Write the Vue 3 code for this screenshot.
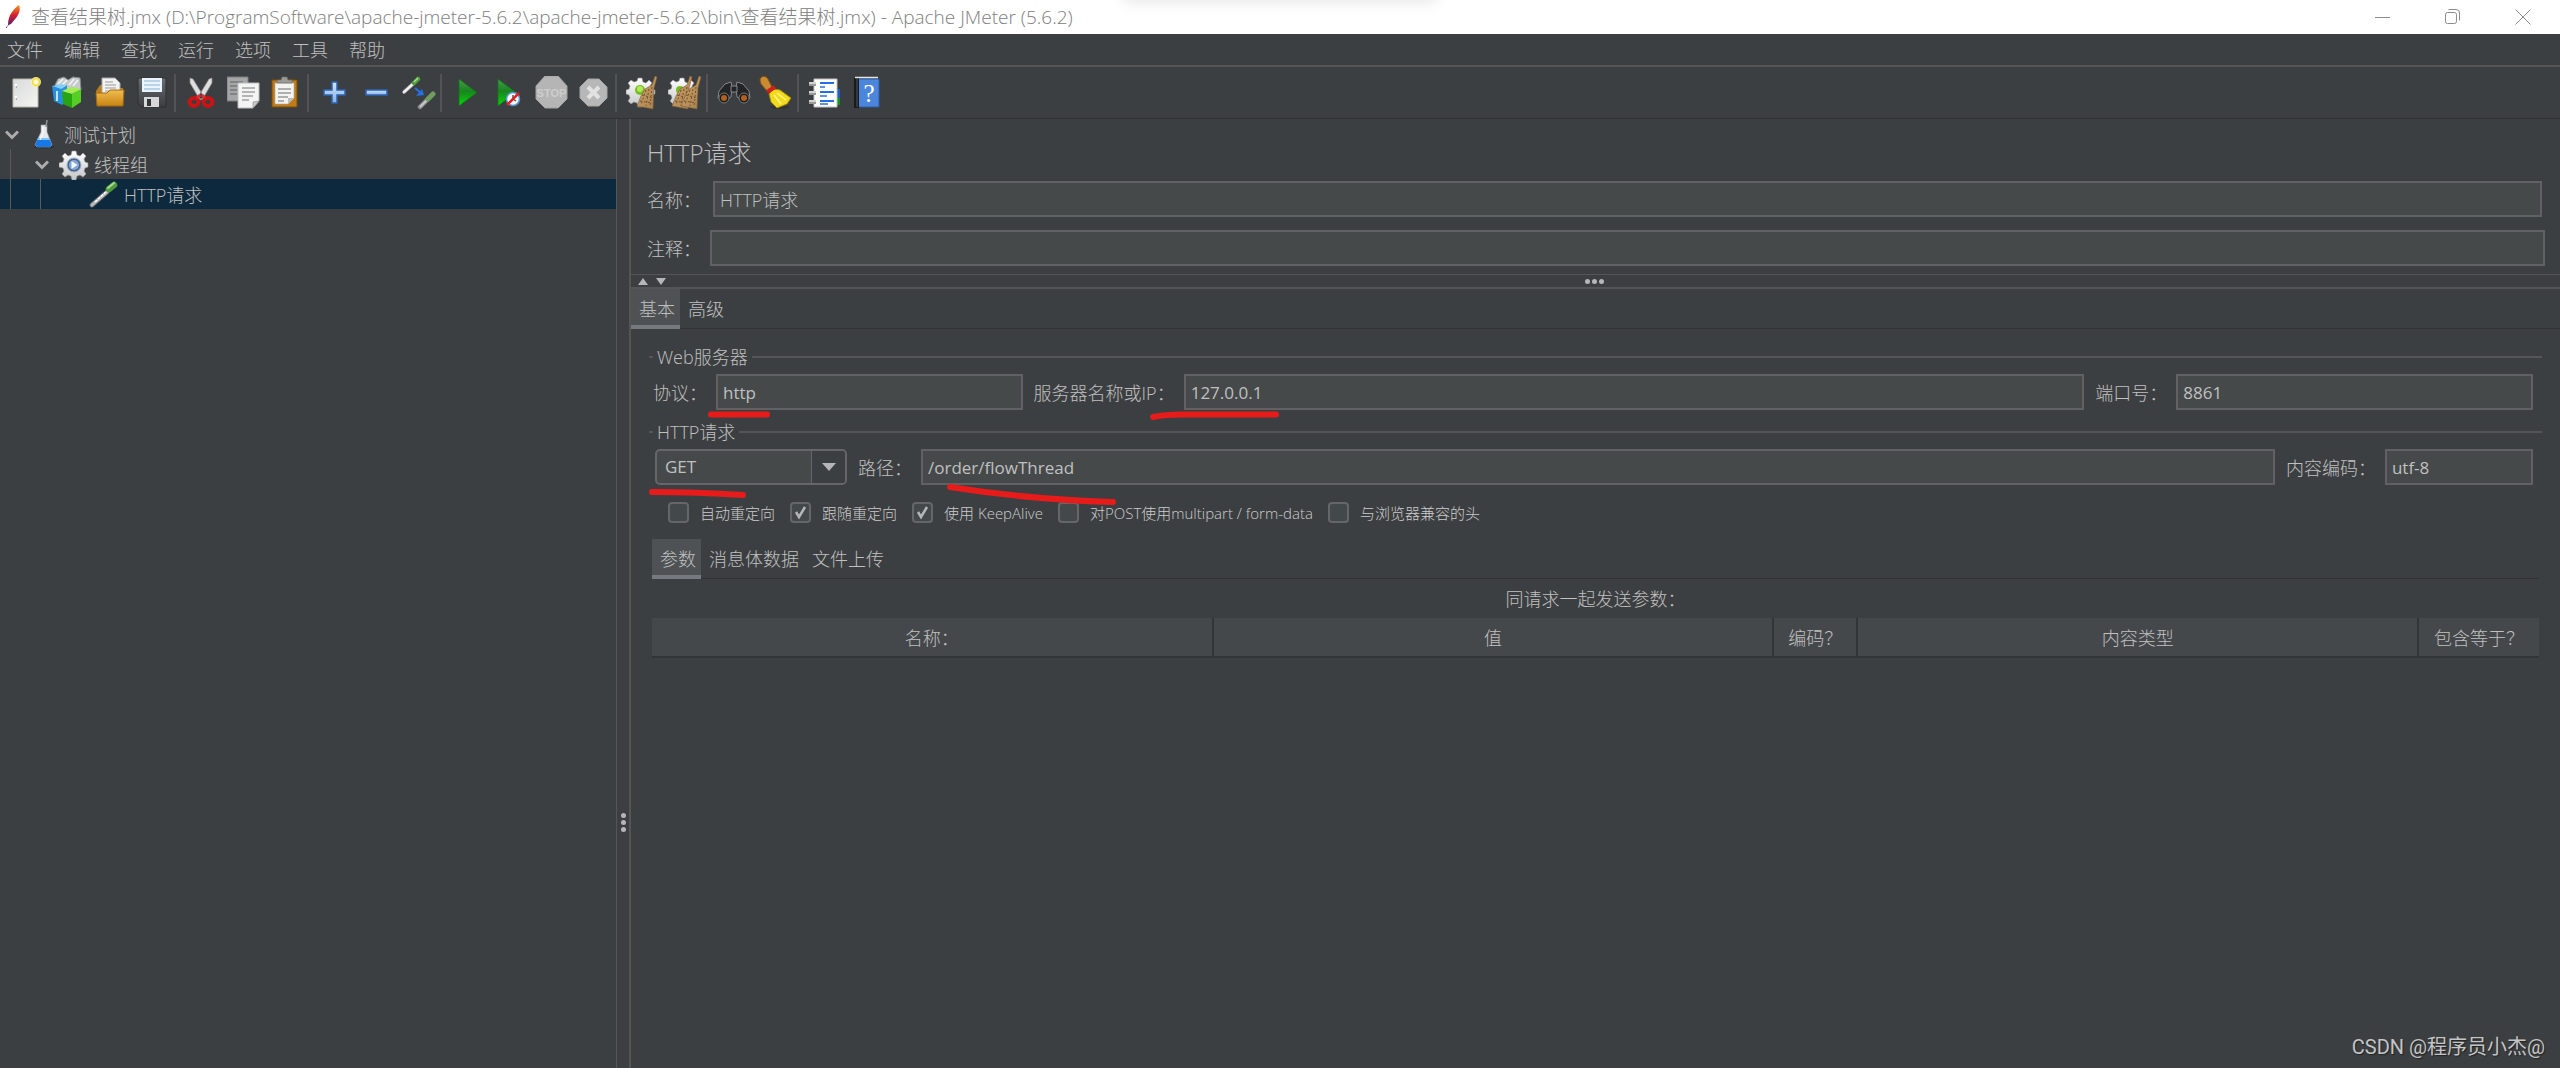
<script setup>
import { ref } from 'vue'

const menus = ['文件', '编辑', '查找', '运行', '选项', '工具', '帮助']

const gear = '<path fill="url(#g-silver)" stroke="#8d8f91" stroke-width=".6" d="M12 2h4l1 4 3 1 3-3 3 3-2 3 1 3 4 1v4l-4 1-1 3 2 3-3 3-3-2-3 1-1 4h-4l-1-4-3-1-3 2-3-3 2-3-1-3-3-1v-4l3-1 1-3-2-3 3-3 3 2 3-1z"/>'
const broom = (x) => `<g transform="translate(${x} 0)"><path fill="url(#g-broom)" stroke="#7a5c36" stroke-width=".6" d="M18 0l2 1-3 11-1 21-16-3 4-10 4-7 7-4z"/><path stroke="#6f5230" stroke-width="1" stroke-dasharray="2 2" d="M5 19l11 3M3 25l12 2M9 14L4 29M12 13L9 30M15 11l-2 20"/></g>`

const groups = [
  [
    { name: '新建', art: '<path fill="url(#g-paper)" stroke="#b9b9a8" d="M3 3h25v28H3z"/><path stroke="#fff" stroke-width="2" d="M5 9h2M5 21h2"/><path stroke="#777" d="M6 11h1M6 23h1"/><circle cx="26" cy="6" r="5" fill="#fff6a0" opacity=".9"/><circle cx="26" cy="6" r="3.500" fill="none" stroke="#f2dc3c" stroke-width="1.500"/><circle cx="26" cy="6" r="2" fill="#fffde8"/>' },
    { name: '模板', art: '<path fill="#c5cacb" stroke="#858b8d" d="M3 9l3-6 6-2 4 3 5-3 7 1 1 12-12 3z"/><path stroke="#f3f5f5" stroke-width="1.500" d="M6 8l5-5M9 10l6-6M17 9l5-6M21 10l5-6"/><path fill="#2590e0" d="M0 10l9 3 6-4v16l-5 4-8-4z"/><path fill="#7fd0ff" d="M0 10l9 3 5-3-4-2z"/><path stroke="#fff" stroke-width="1.500" d="M5 15v10"/><path fill="#28a312" d="M10 15l10 3v14l-9-4z"/><path fill="#55cf24" d="M20 18l9-5v13l-9 6z"/><path fill="#a3ee55" d="M10 15l9-4 10 2-9 5z"/>' },
    { name: '打开', art: '<path fill="#b97d1d" d="M2 15l4-6h7l3 3h13v9H2z"/><path fill="#f3f3f3" stroke="#a9a9a9" d="M8 18V2h13l5 5v12z"/><path stroke="#999" d="M11 6h8M11 9h11M11 12h11M11 15h11"/><path fill="url(#g-folder)" stroke="#a36a0e" d="M2 17h11l3-3h14l-1 16H3z"/>' },
    { name: '保存', art: '<path fill="url(#g-floppy)" stroke="#2f3033" d="M2 2h28v29H5l-3-3z"/><path fill="#eaf4fc" d="M6 2h20v14H6z"/><path stroke="#a9c8e2" stroke-width="1.500" d="M8 5h16M8 9h16M8 13h16"/><path fill="#d8d8d8" d="M8 21h15v10H8z"/><path fill="#33363a" d="M11 23h4v7h-4z"/>' },
  ],
  [
    { name: '剪切', art: '<path fill="#dedede" stroke="#8a8a8a" stroke-width=".7" d="M5 2l3 1 11 18-4 3L5 7zM27 2l-3 1-11 18 4 3L27 7z"/><g fill="none" stroke="#c81414" stroke-width="4"><ellipse cx="9" cy="26" rx="4.500" ry="4"/><ellipse cx="23" cy="26" rx="4.500" ry="4"/></g><path stroke="#e62a2a" stroke-width="3" d="M12 22l3-3M20 22l-3-3"/>' },
    { name: '复制', art: '<path fill="#a4a6a7" stroke="#7b7d7e" d="M0 1h21v24H0z"/><path stroke="#77797a" stroke-width="1.500" d="M3 6h13M3 10h7M3 14h7M3 18h7"/><path fill="#f4f4f4" stroke="#bcbcbc" d="M11 7h21v18l-6 7H11z"/><path stroke="#a0a0a0" stroke-width="1.500" d="M15 12h13M15 16h13M15 20h11M15 24h7"/><path fill="#c9c9c9" stroke="#888" stroke-width=".6" d="M32 25l-6 7v-6z"/>' },
    { name: '粘贴', art: '<path fill="#c17c1a" stroke="#7d4d08" d="M3 4h25v27H3z"/><path fill="#f3f3f1" stroke="#aaa" stroke-width=".6" d="M6 7h19v15l-6 6H6z"/><path stroke="#999" stroke-width="1.500" d="M9 13h13M9 17h13M9 21h10M9 25h6"/><path fill="#bdbdbd" d="M25 22l-6 6v-6z"/><path fill="#9b9c98" stroke="#6a6a66" stroke-width=".7" d="M8 7V4h4l1-3h5l1 3h4v3z"/>' },
  ],
  [
    { name: '展开', art: '<path fill="url(#g-blue)" stroke="#2c64b4" stroke-width="1.500" d="M14 6h5v8h8v5h-8v8h-5v-8H6v-5h8z"/>' },
    { name: '折叠', art: '<path fill="url(#g-blue)" stroke="#2c64b4" stroke-width="1.500" d="M6 14h21v5H6z"/>' },
    { name: '切换', art: '<path stroke="#77797a" stroke-width="4" d="M2 16L12 7"/><path stroke="#f2f2f2" stroke-width="2.500" d="M1 17L12 7"/><path stroke="#4f9c3d" stroke-width="4.500" stroke-linecap="round" d="M12 7l4-4"/><path stroke="#a7e08c" stroke-width="1.500" d="M12 6l4-4"/><path stroke="#2471e8" stroke-width="2" d="M13 12l6 5"/><path fill="#2471e8" d="M22 19l-8 1 6-7z"/><path stroke="#8b8d8e" stroke-width="4.500" stroke-linecap="round" d="M18 31l8-8"/><path stroke="#c7c9c9" stroke-width="2" d="M18 31l7-7"/><path stroke="#6f9c62" stroke-width="5" stroke-linecap="round" d="M26 23l5-5"/>' },
  ],
  [
    { name: '启动', art: '<path fill="url(#g-play)" stroke="#12701a" stroke-width=".8" d="M8 3l18 13.500L8 30z"/>' },
    { name: '无停顿启动', art: '<path fill="url(#g-play)" stroke="#12701a" stroke-width=".8" d="M5 3l18 13.500L5 30z"/><circle cx="20" cy="23" r="6.500" fill="#f4f6fa" stroke="#5b93cf" stroke-width="1.500"/><path stroke="#555" stroke-width="1.500" d="M20 23v-4M20 23l3 2"/><path stroke="#dd2222" stroke-width="2.500" d="M14 29l12-12"/>' },
    { name: '停止', art: '<path fill="#b5b5b5" stroke="#a3a3a3" d="M10 0h13l9 10v13l-9 9H10l-9-9V10z"/><text x="16.500" y="21" text-anchor="middle" font-family="Liberation Sans, sans-serif" font-size="11" font-weight="700" fill="#cdcdcd">STOP</text>' },
    { name: '关闭', art: '<path fill="#b7b7b7" stroke="#a5a5a5" d="M11 3h11l8 8v11l-8 8H11l-8-8V11z"/><path stroke="#e2e2e2" stroke-width="4" d="M11 11l11 11M22 11L11 22"/>' },
  ],
  [
    { name: '清除', art: gear + '<circle cx="14" cy="14" r="5" fill="#76bd21"/><circle cx="14" cy="13" r="3" fill="#b4e65d"/>' + broom(11) },
    { name: '清除全部', art: gear + '<circle cx="12" cy="14" r="4" fill="#76bd21"/>' + broom(4) + broom(13) },
  ],
  [
    { name: '查找', art: '<g fill="#232425" stroke="#85898b" stroke-width="1"><path d="M8 8l6-2 1 5-1 10-5 3-8-2 1-7z"/><path d="M26 8l-6-2-1 5 1 10 5 3 8-2-1-7z"/><path d="M14 10h6v6h-6z"/></g><circle cx="7" cy="22" r="5" fill="#1a1a1a" stroke="#77797a"/><circle cx="27" cy="22" r="5" fill="#1a1a1a" stroke="#77797a"/><circle cx="7" cy="22" r="3" fill="#b3601e"/><circle cx="27" cy="22" r="3" fill="#b3601e"/>' },
    { name: '重置搜索', art: '<ellipse cx="21" cy="31" rx="10" ry="2" fill="#25272880"/><path fill="#c98a32" stroke="#85530f" d="M1 4c0-4 6-5 8-1l4 8-5 4-6-7z"/><path fill="#f1d91c" stroke="#a38808" d="M15 13l6 1 11 8-4 6-10 4-6-6-2-8z"/><path stroke="#fff38a" stroke-width="1.500" d="M18 17l9 7M15 19l7 9"/><path stroke="#c9201d" stroke-width="4" d="M8 16l8-5"/>' },
  ],
  [
    { name: '函数助手', art: '<path fill="#1c5fc9" d="M26 13h6v9h-6z"/><path fill="#169020" d="M26 22h6v7h-6z"/><path fill="#fff" stroke="#c2c2c2" d="M6 3h23v28H6z"/><path stroke="#2470e0" stroke-width="2" d="M12 7h14M12 16h14M12 25h14"/><path stroke="#2470e0" stroke-width="1.500" d="M12 11h5M12 20h7M12 28h8"/><path stroke="#999" stroke-width="4" d="M1 8h7M1 17h7M1 26h7"/><path stroke="#e8e8e8" stroke-width="1.500" d="M1 7h7M1 16h7M1 25h7"/>' },
    { name: '帮助', art: '<path fill="#4c86dc" stroke="#2b5ca8" d="M8 3h21v28H8z"/><path fill="#191a1c" d="M4 2h5v30H4z"/><path stroke="#e6e6e6" stroke-width="1.500" d="M5 1.500h23"/><path stroke="#555" d="M7 3v28"/><text x="19" y="26" text-anchor="middle" font-family="Liberation Serif, serif" font-size="25" fill="#fff">?</text>' },
  ],
]

const name = ref('HTTP请求')
const comment = ref('')
const protocol = ref('http')
const server = ref('127.0.0.1')
const port = ref('8861')
const method = ref('GET')
const path = ref('/order/flowThread')
const encoding = ref('utf-8')

const options = ref([
  { label: '自动重定向', on: false },
  { label: '跟随重定向', on: true },
  { label: '使用 KeepAlive', on: true },
  { label: '对POST使用multipart / form-data', on: false },
  { label: '与浏览器兼容的头', on: false },
])

const mainTabs = ['基本', '高级']
const mainTab = ref('基本')
const bodyTabs = ['参数', '消息体数据', '文件上传']
const bodyTab = ref('参数')
</script>

<template>
  <div class="window">
    <svg class="defs" aria-hidden="true">
      <defs>
        <linearGradient id="g-paper" x2="1" y2="1"><stop stop-color="#d9dadb" /><stop offset="1" stop-color="#f4f4f2" /></linearGradient>
        <linearGradient id="g-folder" x2="0" y2="1"><stop stop-color="#f0bd52" /><stop offset="1" stop-color="#c78412" /></linearGradient>
        <linearGradient id="g-floppy" x2="0" y2="1"><stop stop-color="#6a6d72" /><stop offset="1" stop-color="#3a3c40" /></linearGradient>
        <linearGradient id="g-silver" x2="0" y2="1"><stop stop-color="#ffffff" /><stop offset="1" stop-color="#c3c5c6" /></linearGradient>
        <linearGradient id="g-broom" x2="1" y2="1"><stop stop-color="#cfa36a" /><stop offset="1" stop-color="#a9804e" /></linearGradient>
        <linearGradient id="g-blue" x2="0" y2="1"><stop stop-color="#cfe3f8" /><stop offset="1" stop-color="#86b3e6" /></linearGradient>
        <linearGradient id="g-play" x2="0" y2="1"><stop stop-color="#4a9a4a" /><stop offset=".45" stop-color="#17851e" /><stop offset="1" stop-color="#08d808" /></linearGradient>
        <linearGradient id="g-feather" x2="0" y2="1"><stop stop-color="#f59a23" /><stop offset=".5" stop-color="#d5202f" /><stop offset="1" stop-color="#5c2370" /></linearGradient>
      </defs>
    </svg>

    <header class="titlebar">
      <svg class="feather" width="18" height="24" viewBox="0 0 18 24" aria-hidden="true">
        <path fill="url(#g-feather)" d="M14 0c2 4 0 9-3 13l-5 6-3 1c0-5 1-9 4-13 3-4 5-6 7-7z" />
        <path stroke="#5c2370" fill="none" stroke-dasharray="2 1" d="M1 23l4-5" />
      </svg>
      <h1>查看结果树.jmx (D:\ProgramSoftware\apache-jmeter-5.6.2\apache-jmeter-5.6.2\bin\查看结果树.jmx) - Apache JMeter (5.6.2)</h1>
      <div class="controls">
        <button aria-label="最小化"><svg width="16" height="16" viewBox="0 0 16 16"><path d="M0 8.500h15" /></svg></button>
        <button aria-label="还原"><svg width="16" height="16" viewBox="0 0 16 16"><rect x=".5" y="3.500" width="11" height="11" rx="2" /><path d="M3.500 .5H11a3.500 3.500 0 0 1 3.500 3.500v7.500" /></svg></button>
        <button aria-label="关闭"><svg width="16" height="16" viewBox="0 0 16 16"><path d="M.5 .5l15 15M15.500 .5l-15 15" /></svg></button>
      </div>
    </header>

    <nav class="menubar">
      <button v-for="m in menus" :key="m">{{ m }}</button>
    </nav>

    <div class="toolbar" role="toolbar">
      <div v-for="(group, i) in groups" :key="i" class="group">
        <button v-for="tool in group" :key="tool.name" :aria-label="tool.name">
          <svg width="34" height="34" viewBox="0 0 34 34" fill="none" v-html="tool.art"></svg>
        </button>
      </div>
    </div>

    <div class="body">
      <aside class="tree">
        <ul>
          <li class="node">
            <svg class="chevron" width="14" height="10" viewBox="0 0 14 10"><path d="M1 1.500l6 6 6-6" /></svg>
            <svg class="glyph" width="30" height="30" viewBox="0 0 30 30">
              <ellipse cx="15" cy="27" rx="10" ry="1.500" fill="#2b2d2e" />
              <path fill="#e3e8ec" stroke="#9aa2a8" stroke-width=".6" d="M12 5h6v7l5 13-2 2H8l-2-2 6-13z" />
              <path fill="#1a78e6" d="M9 18h11l3 7-2 2H8l-2-2z" />
              <path fill="#7fc0ff" d="M9 18h11l1 2H8z" />
              <path stroke="#8f9496" stroke-width="1.500" d="M17 7l1-7" />
              <path stroke="#fff" d="M14 7v6l-3 7" fill="none" />
            </svg>
            测试计划
          </li>
          <li class="node level-1">
            <svg class="chevron" width="14" height="10" viewBox="0 0 14 10"><path d="M1 1.500l6 6 6-6" /></svg>
            <svg class="glyph" width="30" height="30" viewBox="0 0 30 30">
              <path fill="url(#g-silver)" stroke="#999c9e" stroke-width=".6" d="M13 1h4l1 4 3 1 3-3 3 3-2 3 1 3 3 1v4l-3 1-1 3 2 3-3 3-3-2-3 1-1 4h-4l-1-4-3-1-3 2-3-3 2-3-1-3-4-1v-4l4-1 1-3-2-3 3-3 3 3 3-1z" />
              <circle cx="15" cy="15" r="7" fill="#47648f" stroke="#a3b2c6" />
              <circle cx="15" cy="15" r="5" fill="#86a8d6" />
              <path fill="#f4f8fc" d="M12.500 11l6 4-6 4z" />
            </svg>
            线程组
          </li>
          <li class="node level-2 selected">
            <svg class="glyph" width="30" height="30" viewBox="0 0 30 30">
              <path stroke="#4e5354" stroke-width="5" stroke-linecap="round" d="M3 25L18 12" />
              <path stroke="#b4b8b9" stroke-width="3.500" stroke-linecap="round" d="M3 25L18 12" />
              <path stroke="#fff" stroke-width="1.500" stroke-dasharray="3 1" d="M6 22L17 12" />
              <path stroke="#4f9a3e" stroke-width="6.500" stroke-linecap="round" d="M20 9l5-4" />
              <path stroke="#a5dc8a" stroke-width="2" stroke-linecap="round" d="M19 8l6-5" />
            </svg>
            HTTP请求
          </li>
        </ul>
      </aside>

      <div class="splitter vertical"><i></i><i></i><i></i></div>

      <main class="editor">
        <section class="head">
          <h2>HTTP请求</h2>
          <div class="row name-row">
            <label for="f-name">名称：</label>
            <input id="f-name" v-model="name" class="title-input" type="text" />
          </div>
          <div class="row comment-row">
            <label for="f-comment">注释：</label>
            <input id="f-comment" v-model="comment" type="text" />
          </div>
        </section>

        <div class="splitter horizontal">
          <svg class="arrows" width="28" height="7" viewBox="0 0 28 7"><path d="M0 7l5-7 5 7zM18 0h10l-5 7z" /></svg>
          <span class="dots"><i></i><i></i><i></i></span>
        </div>

        <div class="tabs">
          <button v-for="t in mainTabs" :key="t" :class="{ active: t === mainTab }" @click="mainTab = t">{{ t }}</button>
        </div>

        <div class="panel">
          <fieldset>
            <legend>Web服务器</legend>
            <div class="row">
              <label for="f-protocol">协议：</label>
              <div class="field protocol">
                <input id="f-protocol" v-model="protocol" type="text" />
                <svg class="mark" width="80" height="20"><path d="M15 14.500h56" /></svg>
              </div>
              <label for="f-server">服务器名称或IP：</label>
              <div class="field server">
                <input id="f-server" v-model="server" type="text" />
                <svg class="mark" width="140" height="20"><path d="M-11 17c10-2 20-2.500 29-2.500h94" /></svg>
              </div>
              <label for="f-port">端口号：</label>
              <div class="field port">
                <input id="f-port" v-model="port" type="text" />
              </div>
            </div>
          </fieldset>

          <fieldset>
            <legend>HTTP请求</legend>
            <div class="row">
              <div class="field method">
                <select v-model="method" aria-label="方法">
                  <option>GET</option>
                  <option>POST</option>
                  <option>PUT</option>
                  <option>DELETE</option>
                </select>
                <span class="arrow"><svg width="14" height="8" viewBox="0 0 14 8"><path d="M0 0h14L7 8z" /></svg></span>
                <svg class="mark" width="120" height="30"><path d="M17 17c30 0 60 1 91 3" /></svg>
              </div>
              <label for="f-path">路径：</label>
              <div class="field path">
                <input id="f-path" v-model="path" type="text" />
                <svg class="mark" width="220" height="30"><path d="M49 12c50 8 100 13 163 15" /></svg>
              </div>
              <label for="f-encoding">内容编码：</label>
              <div class="field encoding">
                <input id="f-encoding" v-model="encoding" type="text" />
              </div>
            </div>
          </fieldset>

          <div class="options">
            <label v-for="o in options" :key="o.label">
              <input v-model="o.on" type="checkbox" />{{ o.label }}
            </label>
          </div>

          <div class="inner">
            <div class="tabs">
              <button v-for="t in bodyTabs" :key="t" :class="{ active: t === bodyTab }" @click="bodyTab = t">{{ t }}</button>
            </div>
            <table>
              <caption>同请求一起发送参数：</caption>
              <colgroup>
                <col />
                <col />
                <col class="narrow" />
                <col />
                <col class="last" />
              </colgroup>
              <thead>
                <tr><th>名称：</th><th>值</th><th>编码？</th><th>内容类型</th><th>包含等于？</th></tr>
              </thead>
            </table>
          </div>
        </div>
      </main>
    </div>

    <p class="credit">CSDN @程序员小杰@</p>
  </div>
</template>

<style>
body {
  margin: 0;
  background: #3c3f41;
}
</style>

<style scoped>
.window {
  position: relative;
  display: flex;
  flex-direction: column;
  box-sizing: border-box;
  min-height: 100vh;
  background: #3c3f41;
  color: #c0c0c0;
  font: 300 18px/24px "Open Sans", "Noto Sans CJK SC", sans-serif;
}

.defs {
  position: absolute;
  width: 0;
  height: 0;
}

button,
input,
select {
  font: inherit;
  color: inherit;
  box-sizing: border-box;
}

button {
  border: 0;
  padding: 0;
  background: none;
}

/* title bar */
.titlebar {
  position: relative;
  display: flex;
  align-items: center;
  height: 34px;
  overflow: hidden;
  padding: 0 2px 0 5px;
  background: #fff;
  color: #808080;
}

.titlebar::before {
  content: "";
  position: absolute;
  top: -10px;
  left: 44%;
  width: 12%;
  height: 8px;
  box-shadow: 0 0 16px 2px #00000024;
}

.titlebar h1 {
  flex: 1;
  margin: 0 0 0 8px;
  font: inherit;
  font-size: 19px;
  white-space: nowrap;
}

.controls {
  display: flex;
}

.controls button {
  display: grid;
  place-items: center;
  width: 70px;
  height: 34px;
}

.controls svg {
  fill: none;
  stroke: #8c8c8c;
}

/* menu and toolbar */
.menubar {
  display: flex;
  height: 31px;
  border-bottom: 2px solid #555555;
}

.menubar button {
  padding: 0 14px 0 7px;
}

.toolbar {
  display: flex;
  align-items: center;
  height: 51px;
  padding-left: 6px;
  border-bottom: 1px solid #323232;
}

.group {
  display: flex;
}

.group + .group {
  padding-left: 5px;
  border-left: 2px solid #515354;
}

.group button {
  display: grid;
  place-items: center;
  width: 42px;
  height: 38px;
}

/* tree */
.body {
  flex: 1;
  display: flex;
}

.tree {
  flex: 0 0 24%;
  min-width: 616px;
  box-sizing: border-box;
}

.tree ul {
  margin: 0;
  padding: 0;
  list-style: none;
}

.node {
  display: flex;
  align-items: center;
  box-sizing: border-box;
  height: 30px;
  padding: 2px 0 0 5px;
}

.node .chevron {
  fill: none;
  stroke: #adadad;
  stroke-width: 3;
}

.node .glyph {
  margin: 0 5px 0 10px;
  fill: none;
}

.level-1 {
  padding-left: 35px;
  background: linear-gradient(#5a5a5a, #5a5a5a) 10px 0 / 1px 100% no-repeat;
}

.level-2 {
  padding-left: 79px;
  background: linear-gradient(#5a5a5a, #5a5a5a) 10px 0 / 1px 100% no-repeat, linear-gradient(#5a5a5a, #5a5a5a) 40px 0 / 1px 100% no-repeat;
}

.selected {
  background-color: #0d293e;
}

/* splitters */
.splitter i {
  width: 5px;
  height: 5px;
  border-radius: 50%;
  background: #b4b6b8;
}

.vertical {
  display: flex;
  flex-direction: column;
  align-items: center;
  justify-content: center;
  gap: 2px;
  width: 12px;
  border-left: 1px solid #555555;
  border-right: 2px solid #555555;
}

.vertical i:first-child {
  margin-top: 458px;
}

.horizontal {
  display: flex;
  align-items: center;
  height: 12px;
  padding-left: 7px;
  border-top: 1px solid #555555;
  border-bottom: 2px solid #555555;
}

.arrows {
  fill: #b4b6b8;
}

.dots {
  flex: 1;
  display: flex;
  justify-content: center;
  gap: 2px;
  padding-right: 37px;
}

/* editor */
.editor {
  flex: 1;
  min-width: 0;
}

.head {
  padding: 18px 15px 8px 16px;
}

h2 {
  margin: 0 0 12px;
  font: inherit;
  font-size: 24px;
  line-height: 32px;
}

.row {
  display: flex;
  align-items: center;
  height: 36px;
}

.row label {
  flex: none;
  padding-top: 2px;
}

.name-row {
  gap: 12px;
  margin: 0 3px 13px 0;
}

.comment-row {
  gap: 9px;
}

.row input {
  width: 100%;
  min-width: 0;
  height: 36px;
  padding: 0 5px;
  border: 2px solid #5f6162;
  border-radius: 0;
  background: #45494a;
  font-size: 17px;
  font-weight: 400;
  outline: 0;
}

.row .title-input {
  font-size: 18px;
  font-weight: 300;
}

.tabs {
  display: flex;
  height: 40px;
  box-shadow: inset 0 -1px #323232;
}

.tabs button {
  padding: 3px 5px 0 8px;
  border-bottom: 4px solid transparent;
}

.tabs .active {
  border-color: #747a80;
  background: #4e5254;
}

.panel {
  padding: 16px 18px 0;
}

fieldset {
  min-width: 0;
  margin: 0 0 10px;
  padding: 5px 9px 0 4px;
  border: 0;
  border-top: 2px solid #555555;
}

legend {
  padding: 0 4px;
}

.field {
  position: relative;
  flex: 1 1 0;
  margin: 0 11px 0 9px;
}

.field:last-child {
  margin-right: 0;
}

.protocol {
  flex-grow: 306;
}

.server {
  flex-grow: 899;
}

.port {
  flex-grow: 356;
}

.path {
  flex-grow: 1353;
}

.encoding {
  flex-grow: 148;
}

.method {
  flex: 0 0 192px;
  height: 36px;
  margin-left: 2px;
}

.method select {
  width: 100%;
  height: 36px;
  padding: 0 45px 0 8px;
  border: 2px solid #646667;
  border-radius: 5px;
  background: #45494a;
  font-size: 17px;
  font-weight: 400;
  appearance: none;
}

.method .arrow {
  position: absolute;
  top: 2px;
  right: 2px;
  display: grid;
  place-items: center;
  width: 33px;
  height: 32px;
  border-left: 1px solid #646667;
  border-radius: 0 3px 3px 0;
  background: #3c3f41;
  pointer-events: none;
}

.arrow svg {
  fill: #b4b6b8;
}

/* hand-drawn underlines */
.mark {
  position: absolute;
  z-index: 1;
  top: 26px;
  left: -20px;
  overflow: visible;
  fill: none;
  stroke: #e81b1b;
  stroke-width: 6;
  stroke-linecap: round;
  pointer-events: none;
}

.options {
  display: flex;
  gap: 15px;
  margin: 17px 0 16px 19px;
  color: #cccccc;
  font-size: 15px;
  line-height: 20px;
}

.options label {
  display: flex;
  align-items: center;
  gap: 11px;
}

.options input {
  width: 21px;
  height: 21px;
  margin: 0;
  border: 2px solid #646667;
  border-radius: 4px;
  background: #43494a;
  appearance: none;
}

.options input:checked {
  background: url("data:image/svg+xml,%3Csvg xmlns='http://www.w3.org/2000/svg' viewBox='0 0 17 17'%3E%3Cpath d='M4 8l3 5 6-10' fill='none' stroke='%23b4b6b8' stroke-width='2.500'/%3E%3C/svg%3E") #43494a;
}

.inner {
  margin: 0 3px;
}

table {
  width: 100%;
  table-layout: fixed;
  border-collapse: collapse;
}

caption {
  padding: 8px 0 7px;
}

.narrow {
  width: 84px;
}

.last {
  width: 121px;
}

th {
  height: 36px;
  padding: 2px 0 0;
  border-bottom: 2px solid #323537;
  background: #45484a;
  font-weight: inherit;
}

th + th {
  border-left: 2px solid #323537;
}

.credit {
  position: absolute;
  right: 15px;
  bottom: 8px;
  margin: 0;
  color: #c4c5c6;
  font: 400 20px/26px Roboto, "Noto Sans CJK SC", sans-serif;
  text-shadow: 1px 1px 1px #222;
}
</style>
